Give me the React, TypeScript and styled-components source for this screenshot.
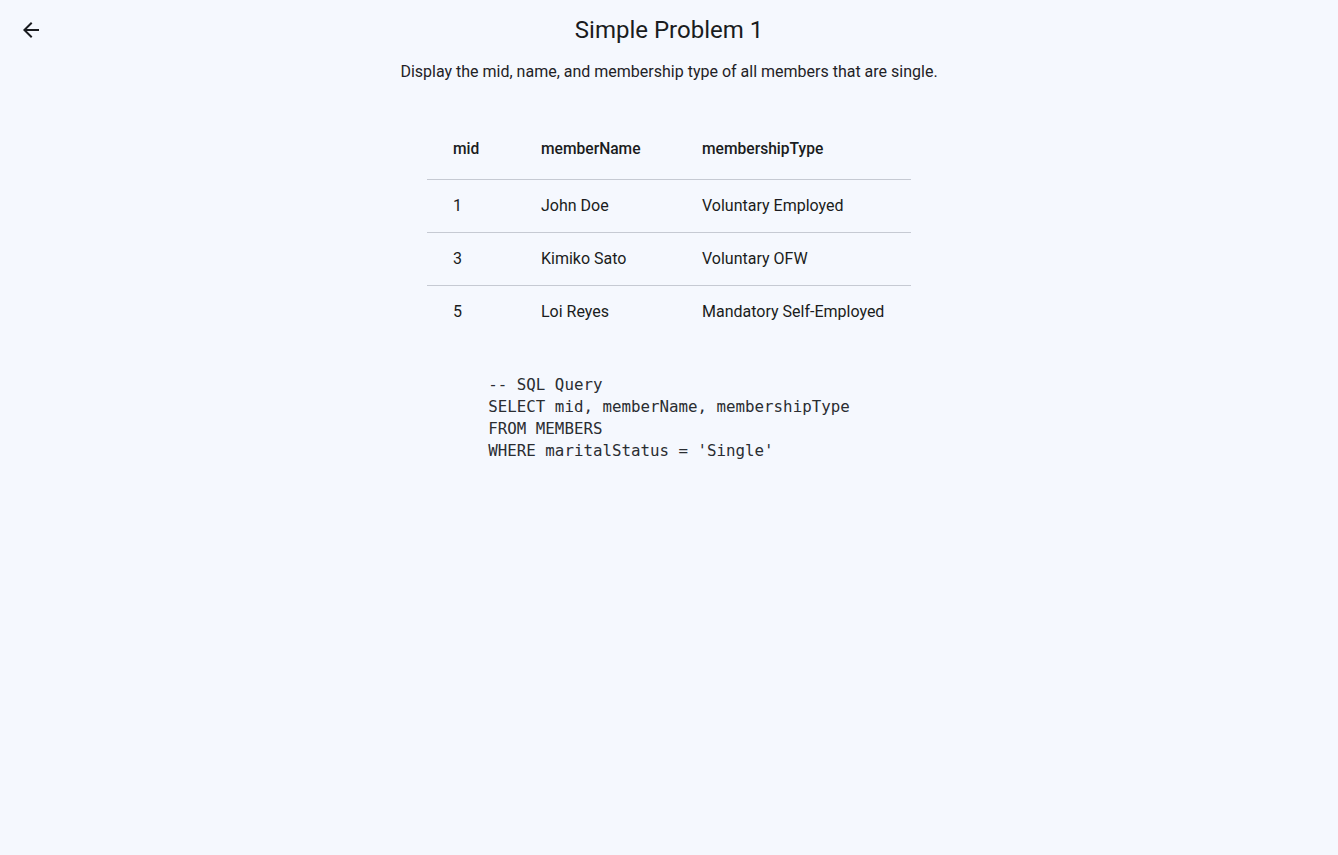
import React from "react";
import styled, { createGlobalStyle } from "styled-components";

const Global = createGlobalStyle`
  html, body {
    margin: 0;
    padding: 0;
    background: #f5f8fe;
  }
  body {
    font-family: Roboto, "Noto Sans", "Liberation Sans", sans-serif;
    color: #1a1c20;
    min-height: 855px;
  }
`;

const Page = styled.div`
  display: flex;
  flex-direction: column;
  align-items: center;
  min-height: 855px;
`;

const AppBar = styled.header`
  width: 100%;
  height: 60px;
  display: grid;
  grid-template-columns: 62px 1fr 62px;
  align-items: center;
`;

const BackButton = styled.button`
  width: 40px;
  height: 40px;
  margin-left: 11px;
  border: none;
  background: transparent;
  padding: 0;
  display: flex;
  align-items: center;
  justify-content: center;
  color: #1a1c20;
  cursor: pointer;
`;

const Title = styled.h1`
  margin: 0;
  text-align: center;
  font-size: 24px;
  font-weight: 400;
  line-height: 30px;
  color: #1a1c20;
`;

const Subtitle = styled.p`
  margin: 0;
  font-size: 16px;
  line-height: 24px;
  letter-spacing: 0;
  color: #1f2226;
`;

const Table = styled.div`
  margin-top: 40px;
  width: 484px;
  display: grid;
  grid-template-columns: 114px 161px 1fr;
`;

const Cell = styled.div<{ $head?: boolean; $last?: boolean }>`
  box-sizing: border-box;
  height: ${(p) => (p.$head ? 56 : p.$last ? 52 : 53)}px;
  padding-bottom: ${(p) => (p.$head ? 6 : 0)}px;
  display: flex;
  align-items: center;
  font-size: ${(p) => (p.$head ? 15.6 : 16)}px;
  line-height: 22px;
  font-weight: ${(p) => (p.$head ? 500 : 400)};
  color: #1a1c20;
  border-bottom: ${(p) => (p.$last ? "none" : "1px solid #c6cad3")};
  white-space: nowrap;
  &:nth-child(3n + 1) {
    padding-left: 26px;
  }
`;

const Code = styled.pre`
  margin: 36px 0 0;
  font-family: "DejaVu Sans Mono", "Liberation Mono", monospace;
  font-size: 15.8px;
  line-height: 22px;
  color: #2a2d32;
  text-align: left;
`;

const rows = [
  { mid: "1", name: "John Doe", type: "Voluntary Employed" },
  { mid: "3", name: "Kimiko Sato", type: "Voluntary OFW" },
  { mid: "5", name: "Loi Reyes", type: "Mandatory Self-Employed" },
];

const sql = `-- SQL Query
SELECT mid, memberName, membershipType
FROM MEMBERS
WHERE maritalStatus = 'Single'`;

export default function App() {
  return (
    <>
      <Global />
      <Page>
        <AppBar>
          <BackButton aria-label="Back">
            <svg width="24" height="24" viewBox="0 0 24 24" fill="currentColor">
              <path d="M20 11H7.83l5.59-5.59L12 4l-8 8 8 8 1.41-1.41L7.83 13H20v-2z" />
            </svg>
          </BackButton>
          <Title>Simple Problem 1</Title>
          <div />
        </AppBar>
        <Subtitle>Display the mid, name, and membership type of all members that are single.</Subtitle>
        <Table>
          <Cell $head>mid</Cell>
          <Cell $head>memberName</Cell>
          <Cell $head>membershipType</Cell>
          {rows.map((r, i) => {
            const last = i === rows.length - 1;
            return (
              <React.Fragment key={r.mid}>
                <Cell $last={last}>{r.mid}</Cell>
                <Cell $last={last}>{r.name}</Cell>
                <Cell $last={last}>{r.type}</Cell>
              </React.Fragment>
            );
          })}
        </Table>
        <Code>{sql}</Code>
      </Page>
    </>
  );
}
